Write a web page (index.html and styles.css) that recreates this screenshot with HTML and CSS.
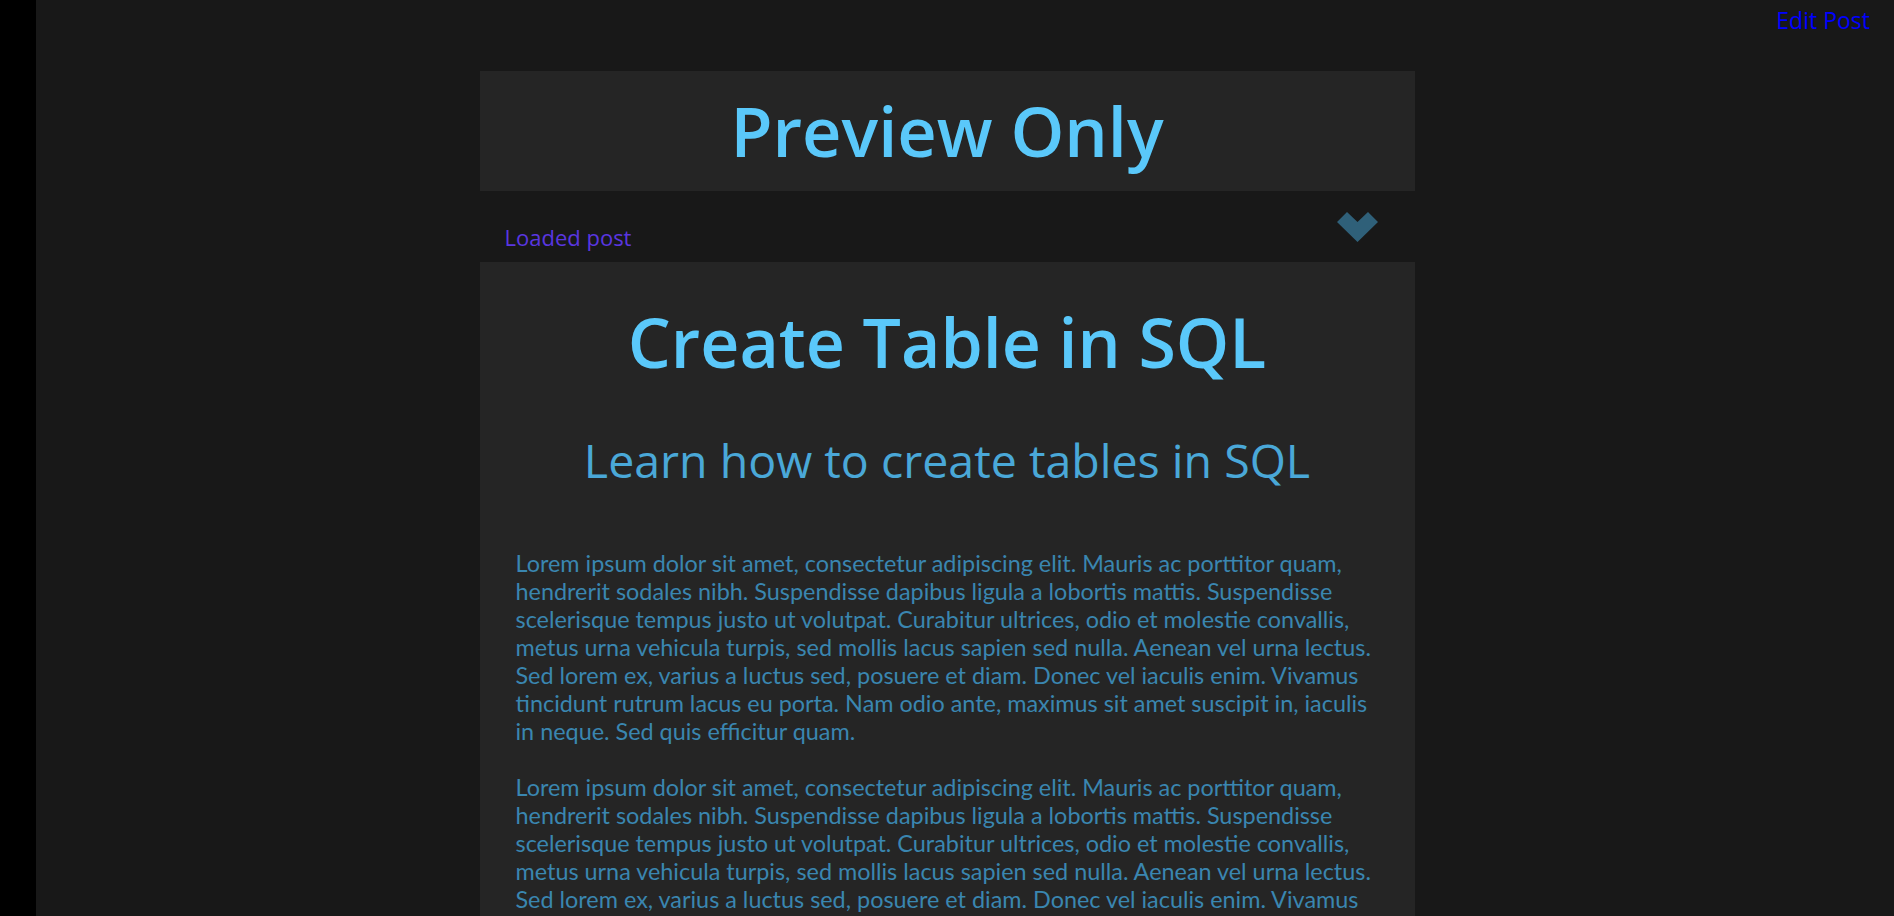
FILE: index.html
```html
<!DOCTYPE html>
<html lang="en">
<head>
<meta charset="utf-8">
<title>Preview Only</title>
<link rel="stylesheet" href="styles.css">
</head>
<body>
<aside class="side-strip"></aside>
<div class="page">
  <nav class="topbar">
    <a class="edit-link" href="#">Edit Post</a>
  </nav>
  <main class="column">
    <header class="preview-banner">
      <h1 class="preview-title">Preview Only</h1>
    </header>
    <div class="status-row">
      <span class="status-label">Loaded post</span>
      <svg class="chevron" width="41" height="30" viewBox="0 0 41 30" aria-hidden="true">
        <polygon points="0,10 10,0 20.5,10 31,0 41,10 20.5,30" fill="#2f6079"/>
      </svg>
    </div>
    <article class="post">
      <h1 class="post-title">Create Table in SQL</h1>
      <h2 class="post-subtitle">Learn how to create tables in SQL</h2>
      <div class="post-body">
        <p>Lorem ipsum dolor sit amet, consectetur adipiscing elit. Mauris ac porttitor quam, hendrerit sodales nibh. Suspendisse dapibus ligula a lobortis mattis. Suspendisse scelerisque tempus justo ut volutpat. Curabitur ultrices, odio et molestie convallis, metus urna vehicula turpis, sed mollis lacus sapien sed nulla. Aenean vel urna lectus. Sed lorem ex, varius a luctus sed, posuere et diam. Donec vel iaculis enim. Vivamus tincidunt rutrum lacus eu porta. Nam odio ante, maximus sit amet suscipit in, iaculis in neque. Sed quis efficitur quam.</p>
        <p>Lorem ipsum dolor sit amet, consectetur adipiscing elit. Mauris ac porttitor quam, hendrerit sodales nibh. Suspendisse dapibus ligula a lobortis mattis. Suspendisse scelerisque tempus justo ut volutpat. Curabitur ultrices, odio et molestie convallis, metus urna vehicula turpis, sed mollis lacus sapien sed nulla. Aenean vel urna lectus. Sed lorem ex, varius a luctus sed, posuere et diam. Donec vel iaculis enim. Vivamus tincidunt rutrum lacus eu porta. Nam odio ante, maximus sit amet suscipit in, iaculis in neque. Sed quis efficitur quam.</p>
      </div>
    </article>
  </main>
</div>
</body>
</html>
```

FILE: styles.css
```css
* {
  box-sizing: border-box;
}

html, body {
  margin: 0;
  padding: 0;
}

body {
  background: #181818;
  font-family: "Open Sans", "Noto Sans", sans-serif;
  min-height: 100vh;
  overflow: hidden;
}

.side-strip {
  position: fixed;
  left: 0;
  top: 0;
  bottom: 0;
  width: 36px;
  background: #000;
}

.page {
  display: flex;
  flex-direction: column;
}

.topbar {
  display: flex;
  justify-content: flex-end;
  height: 71px;
  padding: 0 24px 0 0;
}

.edit-link {
  color: #0000ff;
  text-decoration: none;
  font-size: 23px;
  line-height: 32px;
  margin-top: 4px;
}

.column {
  width: 935px;
  margin: 0 auto;
  display: flex;
  flex-direction: column;
}

.preview-banner {
  background: #252525;
  height: 120px;
  display: flex;
  justify-content: center;
}

.preview-title {
  margin: 0;
  font-size: 68.5px;
  font-weight: 600;
  line-height: 120px;
  color: #5ac8fa;
}

.status-row {
  height: 71px;
  display: flex;
  align-items: center;
  justify-content: space-between;
  padding: 0 37px 0 25px;
}

.status-label {
  font-size: 22px;
  line-height: 30px;
  margin-top: 20px;
  color: #5a36e0;
}

.chevron {
  display: block;
}

.post {
  background: #252525;
  padding: 39px 36px 0;
  min-height: 700px;
}

.post-title {
  margin: 0;
  text-align: center;
  font-size: 68px;
  font-weight: 600;
  line-height: 82px;
  color: #5ac8fa;
}

.post-subtitle {
  margin: 49px 0 0;
  text-align: center;
  font-size: 46.5px;
  font-weight: 400;
  line-height: 56px;
  color: #4aa8d8;
}

.post-body {
  margin-top: 61px;
  font-family: Lato, "Open Sans", sans-serif;
  font-size: 23.4px;
  line-height: 28px;
  color: #3a86b0;
}

.post-body p {
  margin: 0 0 28px;
}
```
